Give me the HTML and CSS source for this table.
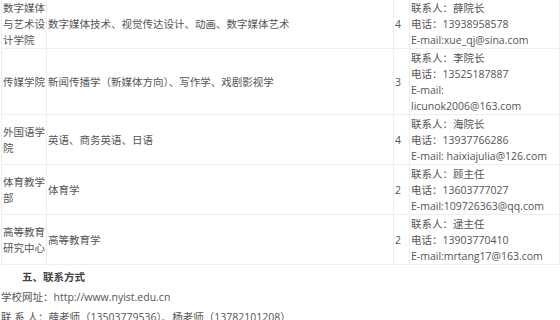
FILE: index.html
```html
<!DOCTYPE html>
<html lang="zh-CN">
<head>
<meta charset="utf-8">
<title>学院联系方式</title>
<link rel="stylesheet" href="styles.css">
</head>
<body>
<div class="page">
  <table class="colleges">
    <colgroup>
      <col class="c-name">
      <col class="c-major">
      <col class="c-num">
      <col class="c-contact">
    </colgroup>
    <tbody>
      <tr>
        <td>数字媒体与艺术设计学院</td>
        <td>数字媒体技术、视觉传达设计、动画、数字媒体艺术</td>
        <td>4</td>
        <td>联系人：薛院长<br>电话：13938958578<br>E-mail:xue_qj@sina.com</td>
      </tr>
      <tr>
        <td>传媒学院</td>
        <td>新闻传播学（新媒体方向）、写作学、戏剧影视学</td>
        <td>3</td>
        <td>联系人：李院长<br>电话：13525187887<br>E-mail:<br>licunok2006@163.com</td>
      </tr>
      <tr>
        <td>外国语学院</td>
        <td>英语、商务英语、日语</td>
        <td>4</td>
        <td>联系人：海院长<br>电话：13937766286<br>E-mail: haixiajulia@126.com</td>
      </tr>
      <tr>
        <td>体育教学部</td>
        <td>体育学</td>
        <td>2</td>
        <td>联系人：顾主任<br>电话：13603777027<br>E-mail:109726363@qq.com</td>
      </tr>
      <tr>
        <td>高等教育研究中心</td>
        <td>高等教育学</td>
        <td>2</td>
        <td>联系人：逯主任<br>电话：13903770410<br>E-mail:mrtang17@163.com</td>
      </tr>
    </tbody>
  </table>
  <p class="heading">五、联系方式</p>
  <p class="line">学校网址：http://www.nyist.edu.cn</p>
  <p class="line">联 系 人：薛老师（13503779536）、杨老师（13782101208）</p>
</div>
</body>
</html>
```

FILE: styles.css
```css
html, body {
  margin: 0;
  padding: 0;
  background: #ffffff;
}

.page {
  padding: 0 1px;
  font-family: "Open Sans", "Noto Sans CJK SC", sans-serif;
  font-size: 10.5px;
  color: #555555;
}

.colleges {
  border-collapse: collapse;
  table-layout: fixed;
  width: 558px;
  margin-top: -2px;
}

.c-name { width: 45px; }
.c-major { width: 347px; }
.c-num { width: 16px; }
.c-contact { width: 150px; }

.colleges td {
  border: 1px solid #eeeeee;
  padding: 1px 0 0 1px;
  line-height: 16px;
  vertical-align: middle;
  word-break: break-all;
}

.heading {
  margin: 2px 0 0;
  padding-left: 21px;
  line-height: 20px;
  font-weight: bold;
  color: #444444;
}

.line {
  margin: 0;
  line-height: 20px;
}
```
